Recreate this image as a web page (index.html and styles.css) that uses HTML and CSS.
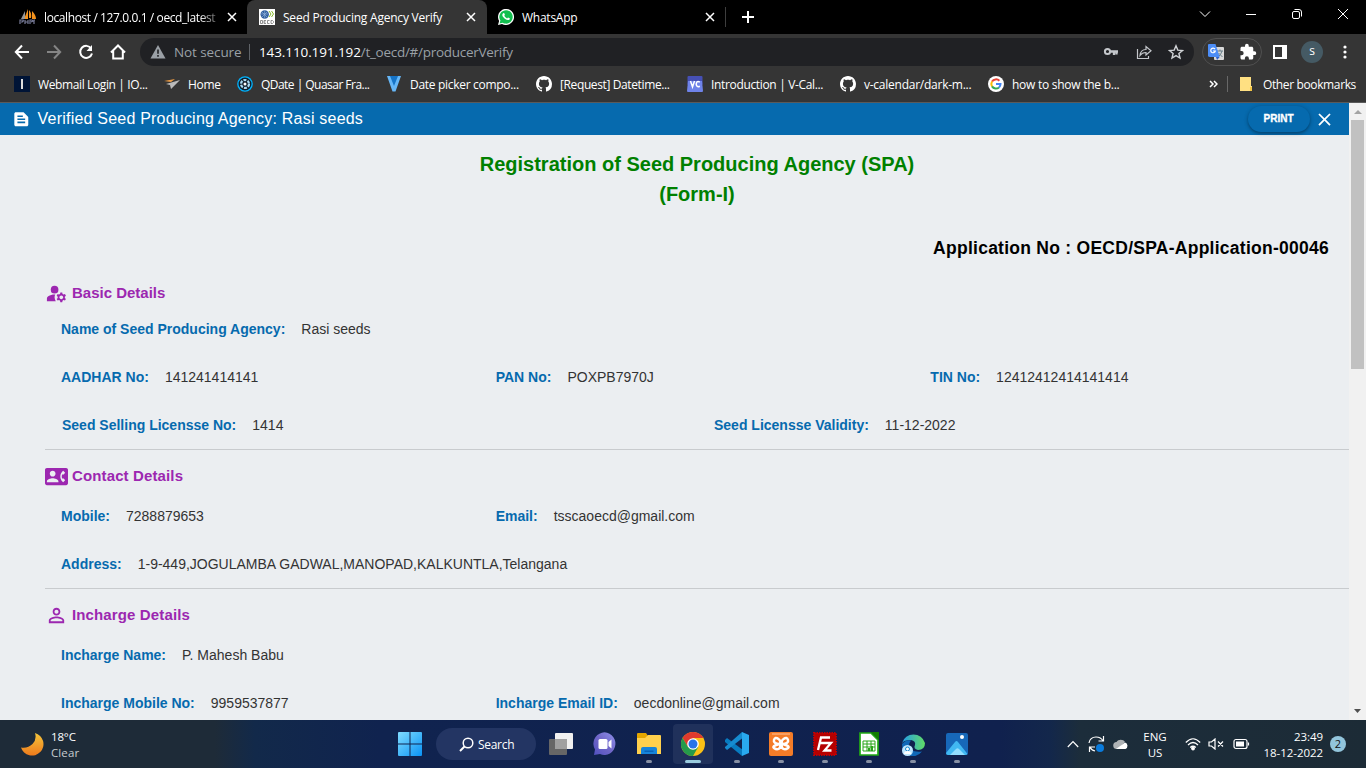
FILE: index.html
```
<!DOCTYPE html>
<html lang="en">
<head>
<meta charset="utf-8">
<title>Seed Producing Agency Verify</title>
<link rel="stylesheet" href="styles.css">
</head>
<body>
<svg class="defs" width="0" height="0">
  <symbol id="x" viewBox="0 0 10 10"><path d="M1 1l8 8M9 1l-8 8" stroke="currentColor" stroke-width="1.5" fill="none"/></symbol>
  <symbol id="github" viewBox="0 0 16 16"><path fill="#fff" d="M8 0C3.58 0 0 3.58 0 8c0 3.54 2.29 6.53 5.47 7.59.4.07.55-.17.55-.38 0-.19-.01-.82-.01-1.49-2.01.37-2.53-.49-2.69-.94-.09-.23-.48-.94-.82-1.13-.28-.15-.68-.52-.01-.53.63-.01 1.08.58 1.23.82.72 1.21 1.87.87 2.33.66.07-.52.28-.87.51-1.07-1.78-.2-3.64-.89-3.64-3.95 0-.87.31-1.59.82-2.15-.08-.2-.36-1.02.08-2.12 0 0 .67-.21 2.2.82.64-.18 1.32-.27 2-.27.68 0 1.36.09 2 .27 1.53-1.04 2.2-.82 2.2-.82.44 1.1.16 1.92.08 2.12.51.56.82 1.27.82 2.15 0 3.07-1.87 3.75-3.65 3.95.29.25.54.73.54 1.48 0 1.07-.01 1.93-.01 2.2 0 .21.15.46.55.38A8.013 8.013 0 0016 8c0-4.42-3.58-8-8-8z"/></symbol>
</svg>

<header class="tabstrip">
  <div class="tab tab-first">
    <svg width="18" height="16" viewBox="0 0 18 16"><path d="M5 10L9 0v10zM10 9V1q3 3 2 8zM13 10V2q4 4 4 8z" fill="#f3921d"/><path d="M2 10L6 2v8z" fill="#999"/><path d="M1 15v-4h3q1 1-1 2H2M6 15v-4M6 13h3M9 11v4M11 15v-4h2l1 1-2 1M15 15v-4h1" stroke="#777b98" stroke-width="1.2" fill="none"/></svg>
    <span class="tab-title fade">localhost / 127.0.0.1 / oecd_latest</span>
    <svg class="tab-x" width="10" height="10"><use href="#x"/></svg>
  </div>
  <div class="tab tab-active">
    <svg width="16" height="16" viewBox="0 0 16 16"><rect width="16" height="16" fill="#fff"/><circle cx="5.7" cy="5.5" r="4.2" fill="#315f9f"/><path d="M2 5h7M5.7 1.5v8M3 3l5 5M8 3L3 8" stroke="#9bbbe0" stroke-width=".6"/><path d="M10 2l2 3-2 3M12.5 2l2 3-2 3" stroke="#88b82d" fill="none"/><path d="M1.500 11.500h2v3h-2zM7 11.500H5v3h2M5 13h1.500M10.500 11.500h-2v3h2M12 11.500h1.500l1 1v1l-1 1H12z" stroke="#777" stroke-width=".8" fill="none"/></svg>
    <span class="tab-title">Seed Producing Agency Verify</span>
    <svg class="tab-x" width="10" height="10"><use href="#x"/></svg>
  </div>
  <div class="tab tab-wa">
    <svg width="16" height="16" viewBox="0 0 16 16"><path d="M0 16l1.1-4A8 8 0 1 1 4 14.9z" fill="#fff"/><path d="M1.600 14.400l.8-2.800a6.700 6.700 0 1 1 2.200 2.100z" fill="#12bf4f"/><path d="M5.200 4.200q.8-.6 1.100.1l.6 1.400q0 .4-.7 1.100 1 1.900 2.900 2.600l.9-1 1.700.8q.4.6-.4 1.500-1.600 1.200-4.500-1T4.300 6q0-1.100.9-1.800z" fill="#fff"/></svg>
    <span class="tab-title">WhatsApp</span>
    <svg class="tab-x" width="10" height="10"><use href="#x"/></svg>
  </div>
  <svg class="plus" width="14" height="14" viewBox="0 0 14 14"><path d="M7 1v12M1 7h12" stroke="#fff" stroke-width="2"/></svg>
  <div class="winctl">
    <svg width="12" height="12" viewBox="0 0 12 12"><path d="M1 3.500l5 5 5-5"/></svg>
    <svg width="12" height="12" viewBox="0 0 12 12"><path d="M1 6.500h10"/></svg>
    <svg width="12" height="12" viewBox="0 0 12 12"><rect x="1.500" y="3.500" width="7" height="7" rx="1.500"/><path d="M3.500 1.500h4.500q2.500 0 2.500 2.500v4.500"/></svg>
    <svg width="12" height="12" viewBox="0 0 12 12"><path d="M1 1l10 10M11 1L1 11"/></svg>
  </div>
</header>

<nav class="toolbar">
  <div class="navbtns">
    <svg width="16" height="16" viewBox="0 0 16 16" stroke="#fff"><path d="M15 8H2M8 1.500L1.800 8 8 14.500"/></svg>
    <svg width="16" height="16" viewBox="0 0 16 16" stroke="#858585"><path d="M1 8h13M8 1.500L14.200 8 8 14.500"/></svg>
    <svg width="16" height="16" viewBox="0 0 16 16" stroke="#fff"><path d="M13.200 4.500A6 6 0 1 0 14 9.500"/><path d="M14 1v6H8.500z" fill="#fff" stroke="none"/></svg>
    <svg width="16" height="16" viewBox="0 0 16 16" stroke="#fff"><path d="M1 8.500L8 1.500l7 7M3.200 7v7.500h9.600V7"/></svg>
  </div>
  <div class="omnibox">
    <svg width="16" height="16" viewBox="0 0 16 16"><path d="M8 1l7.500 13.500H.5z" fill="#9aa0a6"/><path d="M8 5.500v4.300M8 11v1.800" stroke="#202124" stroke-width="1.600"/></svg>
    <span class="notsecure">Not secure</span>
    <span class="vline"></span>
    <span class="url"><b>143.110.191.192</b><i>/t_oecd/#/producerVerify</i></span>
    <div class="omni-icons">
      <svg width="16" height="16" viewBox="0 0 16 16"><circle cx="4.500" cy="7.500" r="2.600" fill="none" stroke="#c4c7cb" stroke-width="2"/><path d="M8 7.500h7M11 8v3M13.500 8v2.500" stroke="#c4c7cb" stroke-width="2.300"/></svg>
      <svg width="17" height="16" viewBox="0 0 17 16"><path d="M2.500 5v9.500h11V12M5 11.500c.4-4 2.500-6 6-6V2.500l5 4.300-5 4.200V8.500C8.500 8.400 6.500 9.500 5 11.500z" fill="none" stroke="#c4c7cb" stroke-width="1.200"/></svg>
      <svg width="16" height="16" viewBox="0 0 16 16"><path d="M8 1.800l1.800 4.300 4.700.4-3.600 3 1.100 4.600-4-2.500-4 2.500 1.100-4.600-3.600-3 4.700-.4z" fill="none" stroke="#d0d3d6" stroke-width="1.400"/></svg>
    </div>
  </div>
  <div class="extpill">
    <svg width="17" height="17" viewBox="0 0 17 17"><rect x="6" y="3" width="10" height="13" rx="1" fill="#d8d8d8"/><path d="M9 7h6M12 5.500V7M14 7q-1 4-4 6M10.500 9l4 4" stroke="#687f89" fill="none"/><path d="M1 0h6.500l4.200 13H2q-2 0-2-1.500V1q0-1 1-1z" fill="#4c8df6"/><path d="M8 13h3.700L9 16z" fill="#2e61cc"/><path d="M7 5.200A2.300 2.300 0 1 0 7.300 7H5" stroke="#fff" stroke-width="1.200" fill="none"/></svg>
    <svg class="puzzle" width="18" height="18" viewBox="0 0 24 24"><path fill="#fff" d="M20.500 11H19V7c0-1.100-.9-2-2-2h-4V3.500a2.500 2.500 0 0 0-5 0V5H4c-1.100 0-2 .9-2 2v3.800h1.500a2.700 2.700 0 0 1 0 5.400H2V20c0 1.100.9 2 2 2h3.800v-1.500a2.700 2.700 0 0 1 5.400 0V22H17c1.100 0 2-.9 2-2v-4h1.500a2.500 2.500 0 0 0 0-5z"/></svg>
  </div>
  <svg class="panel" width="14" height="14" viewBox="0 0 14 14"><path fill="#fff" d="M0 0h14v14H0zM2 2v10h7V2z" fill-rule="evenodd"/></svg>
  <span class="avatar">s</span>
  <svg class="dots" width="4" height="14" viewBox="0 0 4 14" fill="#fff"><circle cx="2" cy="2" r="1.600"/><circle cx="2" cy="7" r="1.600"/><circle cx="2" cy="12" r="1.600"/></svg>
</nav>

<nav class="bookmarks">
  <span class="bm bm1"><svg width="16" height="16"><rect width="16" height="16" fill="#001436"/><path d="M8 3v10" stroke="#ddd" stroke-width="2"/></svg><em>Webmail Login | IO...</em></span>
  <span class="bm bm2"><svg width="16" height="16" viewBox="0 0 16 16"><path d="M0 5l11-2-4 3z" fill="#ee9d45"/><path d="M16 4L2 8l4 1zM16 4L6 9l1 4z" fill="#bbb"/></svg><em>Home</em></span>
  <span class="bm bm3"><svg width="16" height="16" viewBox="0 0 16 16"><circle cx="8" cy="8" r="7.800" fill="#00b4ff"/><circle cx="8" cy="8" r="6.500" fill="#111e2b"/><circle cx="8" cy="8" r="4" fill="none" stroke="#a9d9f2" stroke-width="2.200" stroke-dasharray="3 1.200"/><circle cx="8" cy="8" r="1.500" fill="#fff"/></svg><em>QDate | Quasar Fra...</em></span>
  <span class="bm bm4"><svg width="16" height="16" viewBox="0 0 16 16"><path d="M1 0h5l2 6 2-6h5L9.500 15.500h-3z" fill="#66b7f7"/><path d="M4 0h8L8 10z" fill="#1674c7"/></svg><em>Date picker compo...</em></span>
  <span class="bm bm5"><svg width="16" height="16"><use href="#github"/></svg><em>[Request] Datetime...</em></span>
  <span class="bm bm6"><svg width="16" height="16" viewBox="0 0 16 16"><rect x=".5" width="15" height="9" rx="1" fill="#4650b5"/><path d="M1 5h14l1 10q0 1-1 1H1q-1 0-1-1z" fill="#6f83e9"/><path d="M3.500 5L5.500 11l2-6M12.800 6.200q-3-2-3.600 2 .4 3.500 3.600 2" stroke="#fff" stroke-width="1.500" fill="none"/></svg><em>Introduction | V-Cal...</em></span>
  <span class="bm bm7"><svg width="16" height="16"><use href="#github"/></svg><em>v-calendar/dark-m...</em></span>
  <span class="bm bm8"><svg width="16" height="16" viewBox="0 0 16 16"><circle cx="8" cy="8" r="8" fill="#fff"/><g fill="none" stroke-width="2"><path d="M11.400 4.800A4.700 4.700 0 0 0 4 5.600" stroke="#ea4335"/><path d="M4 5.600a4.700 4.700 0 0 0 0 4.800" stroke="#fbbc05"/><path d="M4 10.400a4.700 4.700 0 0 0 7 1" stroke="#34a853"/><path d="M11 11.400A4.700 4.700 0 0 0 12.500 8H8" stroke="#4285f4"/></g></svg><em>how to show the b...</em></span>
  <svg class="more" width="9" height="8" viewBox="0 0 9 8"><path d="M1 1l3 3-3 3M5 1l3 3-3 3" stroke="#fff" stroke-width="1.500" fill="none"/></svg>
  <span class="bmline"></span>
  <span class="bm other"><svg width="13" height="14" viewBox="0 0 13 14"><path d="M0 0h11v9h1v5H0z" fill="#ffe082"/><path d="M10 10h2v4h-2z" fill="#f3c544"/></svg><em>Other bookmarks</em></span>
</nav>

<div class="view">
  <main class="page">
    <div class="titlebar">
      <svg width="18.600" height="18.600" viewBox="0 0 24 24"><path fill="#fff" d="M20.410 8.410l-4.830-4.830c-.37-.37-.88-.58-1.410-.58H5c-1.100 0-2 .9-2 2v14c0 1.100.9 2 2 2h14c1.100 0 2-.9 2-2V9.830c0-.53-.21-1.040-.59-1.420zM7 7h7v2H7V7zm10 10H7v-2h10v2zm0-4H7v-2h10v2z"/></svg>
      <h1>Verified Seed Producing Agency: Rasi seeds</h1>
      <button class="print">PRINT</button>
      <svg class="close" width="21" height="21" viewBox="0 0 24 24"><path fill="#fff" d="M19 6.410L17.590 5 12 10.590 6.410 5 5 6.410 10.590 12 5 17.590 6.410 19 12 13.410 17.590 19 19 17.590 13.410 12z"/></svg>
    </div>
    <div class="form">
      <h2 class="form-title">Registration of Seed Producing Agency (SPA)<br>(Form-I)</h2>
      <div class="appno">Application No : OECD/SPA-Application-00046</div>

      <section class="sec sec-first">
        <h3><svg width="23" height="23" viewBox="0 0 24 24"><circle cx="10" cy="8" r="4"/><path d="M10.670 13.020C10.450 13.010 10.230 13 10 13c-2.420 0-4.680.67-6.610 1.820-.88.52-1.390 1.500-1.390 2.530V20h9.260c-.79-1.130-1.260-2.510-1.260-4 0-1.070.25-2.070.67-2.980z"/><path d="M20.750 16c0-.22-.03-.42-.06-.63l1.140-1.010-1-1.730-1.450.49c-.32-.27-.68-.48-1.080-.63L18 11h-2l-.3 1.490c-.4.15-.76.36-1.080.63l-1.450-.49-1 1.730 1.140 1.010c-.03.21-.06.41-.06.63s.03.42.06.63l-1.140 1.010 1 1.730 1.450-.49c.32.27.68.48 1.080.63L16 21h2l.3-1.490c.4-.15.76-.36 1.080-.63l1.450.49 1-1.730-1.140-1.010c.03-.21.06-.41.06-.63zM17 18c-1.100 0-2-.9-2-2s.9-2 2-2 2 .9 2 2-.9 2-2 2z"/></svg><span>Basic Details</span></h3>
        <div class="row"><div class="cell"><label>Name of Seed Producing Agency:</label><span>Rasi seeds</span></div></div>
        <div class="row"><div class="cell"><label>AADHAR No:</label><span>141241414141</span></div><div class="cell"><label>PAN No:</label><span>POXPB7970J</span></div><div class="cell"><label>TIN No:</label><span>12412412414141414</span></div></div>
        <div class="row halves"><div class="cell"><label>Seed Selling Licensse No:</label><span>1414</span></div><div class="cell"><label>Seed Licensse Validity:</label><span>11-12-2022</span></div></div>
      </section>
      <section class="sec">
        <h3><svg width="23" height="23" viewBox="0 0 24 24"><path d="M22 3H2C.9 3 0 3.900 0 5v14c0 1.100.9 2 2 2h20c1.100 0 1.990-.9 1.990-2L24 5c0-1.100-.9-2-2-2zM8 6c1.660 0 3 1.340 3 3s-1.340 3-3 3-3-1.340-3-3 1.340-3 3-3zm6 12H2v-1c0-2 4-3.100 6-3.100s6 1.100 6 3.100v1zm3.850-4h1.640L21 16l-1.990 1.990c-1.310-.98-2.280-2.380-2.730-3.990-.18-.64-.28-1.310-.28-2s.1-1.360.28-2c.45-1.620 1.420-3.010 2.730-3.990L21 8l-1.510 2h-1.640c-.22.63-.35 1.300-.35 2s.13 1.370.35 2z"/></svg><span>Contact Details</span></h3>
        <div class="row thirds"><div class="cell"><label>Mobile:</label><span>7288879653</span></div><div class="cell"><label>Email:</label><span>tsscaoecd@gmail.com</span></div></div>
        <div class="row"><div class="cell"><label>Address:</label><span>1-9-449,JOGULAMBA GADWAL,MANOPAD,KALKUNTLA,Telangana</span></div></div>
      </section>
      <section class="sec">
        <h3><svg width="23" height="23" viewBox="0 0 24 24"><path d="M12 5.900c1.160 0 2.100.94 2.100 2.100s-.94 2.100-2.100 2.100S9.900 9.160 9.900 8s.94-2.100 2.100-2.100m0 9c2.970 0 6.100 1.460 6.100 2.100v1.100H5.900V17c0-.64 3.130-2.100 6.100-2.100M12 4C9.790 4 8 5.790 8 8s1.790 4 4 4 4-1.790 4-4-1.790-4-4-4zm0 9c-2.670 0-8 1.340-8 4v3h16v-3c0-2.660-5.330-4-8-4z"/></svg><span>Incharge Details</span></h3>
        <div class="row"><div class="cell"><label>Incharge Name:</label><span>P. Mahesh Babu</span></div></div>
        <div class="row thirds"><div class="cell"><label>Incharge Mobile No:</label><span>9959537877</span></div><div class="cell"><label>Incharge Email ID:</label><span>oecdonline@gmail.com</span></div></div>
      </section>
    </div>
  </main>
  <aside class="scroll">
    <svg width="17" height="17" viewBox="0 0 17 17"><path d="M5 11h8L9 7z" fill="#a3a3a3"/></svg>
    <div class="thumb"></div>
    <svg class="down" width="17" height="17" viewBox="0 0 17 17"><path d="M5 6h7L8.500 10z" fill="#505050"/></svg>
  </aside>
</div>

<footer class="taskbar">
  <div class="weather">
    <svg width="24" height="24" viewBox="0 0 24 24"><defs><linearGradient id="mg" x2="0" y2="1"><stop stop-color="#f4c63c"/><stop offset="1" stop-color="#ee7a1c"/></linearGradient></defs><path d="M15 1A11.500 11.500 0 1 1 1 15.500Q8 16.500 12.500 12T15 1z" fill="url(#mg)"/></svg>
    <p>18°C<br><span>Clear</span></p>
  </div>
  <div class="apps">
    <svg class="start" width="24" height="24" viewBox="0 0 24 24"><defs><linearGradient id="wg" x2="1" y2="1"><stop stop-color="#80dcff"/><stop offset="1" stop-color="#0a93f5"/></linearGradient></defs><path d="M0 1q0-1 1-1h10.500v11.500H0zM12.500 0H23q1 0 1 1v10.500H12.500zM0 12.500h11.500V24H1q-1 0-1-1zM12.500 12.500H24V23q0 1-1 1H12.500z" fill="url(#wg)"/></svg>
    <div class="search"><svg width="15" height="15" viewBox="0 0 15 15"><circle cx="9" cy="6" r="4.800" fill="none" stroke="#fff" stroke-width="1.500"/><path d="M5.500 9.500L1 14" stroke="#fff" stroke-width="1.900"/></svg><span>Search</span></div>
    <div class="app"><svg width="24" height="24" viewBox="0 0 24 24"><rect x="6" y="1" width="18" height="16" rx="1" fill="#f0f0f0"/><rect y="7" width="18" height="16" rx="1" fill="#666"/><path d="M6 7h12v10H6z" fill="#a0a0a0"/></svg></div>
    <div class="app"><svg width="24" height="24" viewBox="0 0 24 24"><defs><linearGradient id="tg" x1="1" x2="0" y2="1"><stop stop-color="#8f91ed"/><stop offset=".5" stop-color="#7067c8"/><stop offset="1" stop-color="#5150c0"/></linearGradient></defs><path d="M1 23l1-5.500A11 11.300 0 1 1 7 22z" fill="url(#tg)"/><rect x="5.500" y="7" width="9" height="10" rx="1.500" fill="#fff"/><path d="M15.500 10l3-2.500v9l-3-2.500z" fill="#fff"/></svg></div>
    <div class="app open"><svg width="24" height="24" viewBox="0 0 24 24"><path d="M0 2q0-1 1-1h8l2 3-2 3H0z" fill="#e4a600"/><path d="M0 6h8l3-3h12q1 0 1 1v18H0z" fill="#ffd04d"/><path d="M4 22v-5q0-2 2-2h12q2 0 2 2v5z" fill="#1684da"/><path d="M7.500 18.500h9v1.500h-9z" fill="#0862b7"/></svg></div>
    <div class="app open current"><svg width="24" height="24" viewBox="0 0 24 24"><circle cx="12" cy="12" r="12" fill="#fbc116"/><path d="M1.600 6A12 12 0 0 1 22.400 6H12L7 15z" fill="#df3a2e"/><path d="M1.600 6A12 12 0 0 0 12 24l5.200-9H7z" fill="#259b4b"/><circle cx="12" cy="12" r="5.800" fill="#fff"/><circle cx="12" cy="12" r="4.500" fill="#2873e8"/></svg></div>
    <div class="app open"><svg width="24" height="24" viewBox="0 0 24 24"><path d="M0 8l2-2 16 12-1 6L0 10z" fill="#087bc0"/><path d="M17 0l2 5L2 18l-2-2v-1z" fill="#168bd0"/><path d="M17 0l7 3v18l-7 3z" fill="#29a9ef"/></svg></div>
    <div class="app open"><svg width="24" height="24" viewBox="0 0 24 24"><rect width="24" height="24" rx="2" fill="#f47c28"/><path d="M3 2h18" stroke="#ffc29a"/><path d="M10.500 12Q4 11.500 5 8t4.500-1q2 1 2 5t-2 5T5 16t5.500-4h3Q20 11.500 19 8t-4.500-1q-2 1-2 5t2 5 4.500-1-5.500-4" stroke="#fff" stroke-width="2.500" fill="none" stroke-linejoin="round"/></svg></div>
    <div class="app open"><svg width="24" height="24" viewBox="0 0 24 24"><rect x="1" y="1" width="22" height="22" fill="#b50000" stroke="#c40000" stroke-width="2" stroke-dasharray="1.500 1"/><path d="M5 18L8 5.500h9M6.500 11h7M12 11h6l-6.500 7.500h7" stroke="#fff" stroke-width="2.300" fill="none"/></svg></div>
    <div class="app open"><svg width="24" height="24" viewBox="0 0 24 24"><path d="M3 1h11l7 7v15H3z" fill="#fff" stroke="#20aa15" stroke-width="1.700"/><path d="M14 0h8v8z" fill="#127d00"/><path d="M6 9h12v10H6zM6 12h12M6 15h12M10 9v10M14 9v10" fill="none" stroke="#29a51b"/><path d="M12 16v3M15 14v5" stroke="#29a51b" stroke-width="2"/></svg></div>
    <div class="app open"><svg width="24" height="24" viewBox="0 0 24 24"><defs><linearGradient id="eg" x2="1"><stop stop-color="#249dea"/><stop offset="1" stop-color="#61dc64"/></linearGradient></defs><path d="M1 11A12 12 0 0 1 24 11q0 7-7 7-5-1-3-5 1-4-4-5-7 0-9 3z" fill="url(#eg)"/><path d="M1 12Q5 7 10 8.500q-4 5 0 9 4 3 11 2Q16 26 8 23.500 1 21 1 12z" fill="#1068b8"/><circle cx="6.500" cy="18.500" r="5.500" fill="#bfe7ff"/><circle cx="6.500" cy="17" r="2" fill="#fff" stroke="#168bd3"/><path d="M3 22q0-3 3.500-3t3.500 3" fill="#fff"/></svg></div>
    <div class="app open"><svg width="24" height="24" viewBox="0 0 24 24"><rect x="1" y="1" width="22" height="22" rx="2" fill="#1768b9"/><path d="M1 21L10 10q1.500-2 3 0l9.500 12q-1 1-2 1H3q-2 0-2-2z" fill="#41b8f2"/><path d="M5 23l6-6q1.500-1.500 3 0l6 6z" fill="#92deff"/><circle cx="17" cy="5" r="2" fill="#fff"/></svg></div>
  </div>
  <div class="tray">
    <svg class="t-up" width="12" height="8" viewBox="0 0 12 8"><path d="M.8 7L6 1.500 11.200 7"/></svg>
    <svg class="t-sync" width="18" height="18" viewBox="0 0 18 18"><path d="M1 8Q2 2 8 2q5 0 7 4M15.500 1v5h-5M7 12H1.500v5M2 12q1 3 5 4"/><circle cx="12" cy="13" r="4" fill="#0a7bdc" stroke="none"/></svg>
    <svg class="t-cloud" width="16" height="12" viewBox="0 0 16 12"><path d="M4 11a3.500 3.500 0 0 1-.5-7A5 5 0 0 1 12 4l-5 5z" fill="#aeb2b5" stroke="none"/><path d="M3 11L12 4.500A3.500 3.500 0 0 1 12.500 11z" fill="#fff" stroke="none"/></svg>
    <p class="lang">ENG<br>US</p>
    <svg class="t-wifi" width="16" height="14" viewBox="0 0 16 14"><path d="M.8 5.500Q8-2 15.200 5.500M3 8Q8 3 13 8M5.200 10.500Q8 8 10.800 10.500"/><circle cx="8" cy="11.500" r="1.300" fill="#fff"/></svg>
    <svg class="t-vol" width="16" height="12" viewBox="0 0 16 12"><path d="M1 4h2.500L7 1v10L3.500 8H1zM10 3.500l5 5M15 3.500l-5 5"/></svg>
    <svg class="t-bat" width="17" height="12" viewBox="0 0 17 12"><rect x="1" y="1.500" width="13" height="9" rx="2"/><rect x="3" y="3.500" width="8" height="5" fill="#fff" stroke="none"/><path d="M15.500 4.500v3"/></svg>
    <p class="clock">23:49<br>18-12-2022</p>
    <span class="notif">2</span>
  </div>
</footer>
</body>
</html>
```
FILE: styles.css
```
* { box-sizing: border-box; }
body { margin: 0; width: 1366px; height: 768px; overflow: hidden; display: flex; flex-direction: column; font-family: "Open Sans", "Noto Sans", sans-serif; font-size: 12px; color: #fff; background: #353535; }
svg { display: block; flex: none; }
p, h1, h2, h3 { margin: 0; font-weight: normal; }
.defs { position: absolute; }
em, i { font-style: normal; }
b { font-weight: 400; }

.tabstrip { height: 34px; background: #000; display: flex; align-items: center; flex: none; }
.tab { display: flex; align-items: center; height: 34px; }
.tab-first { width: 247px; padding-left: 19px; }
.tab-title { white-space: nowrap; }
.tab-first .tab-title { margin-left: 7px; width: 177px; letter-spacing: -.4px; }
.fade { mask-image: linear-gradient(90deg, #000 155px, rgba(0,0,0,.15) 177px); }
.tab-first .tab-x { margin-left: 6px; }
.tab-active { width: 240px; padding-left: 12px; background: #353535; border-radius: 8px 8px 0 0; }
.tab-active .tab-title { margin-left: 8px; width: 183px; letter-spacing: -.22px; }
.tab-wa { width: 239px; padding-left: 11px; border-right: 1px solid #3e3e3e; height: 20px; }
.tab-wa .tab-title { margin-left: 8px; width: 183px; letter-spacing: -.25px; }
.plus { margin-left: 15px; }
.winctl { margin-left: auto; display: flex; gap: 34px; padding: 0 17px 6px 0; fill: none; stroke: #fff; }

.toolbar { height: 36px; display: flex; align-items: center; padding-left: 14px; flex: none; }
.navbtns { display: flex; gap: 16px; fill: none; stroke-width: 2; }
.omnibox { margin-left: 14px; width: 1054px; height: 28px; border-radius: 14px; background: #202124; display: flex; align-items: center; padding-left: 10px; font-size: 13.5px; }
.notsecure { margin-left: 8px; width: 75px; color: #9aa0a6; white-space: nowrap; letter-spacing: -.1px; }
.vline { width: 1px; height: 16px; background: #5f6368; }
.url { margin-left: 9px; letter-spacing: -.28px; white-space: nowrap; }
.url b { letter-spacing: -.1px; }
.url i { color: #9aa0a6; }
.omni-icons { display: flex; gap: 16px; margin-left: auto; padding-right: 10px; }
.extpill { margin-left: 8px; width: 60px; height: 28px; border: 1px solid #505050; border-radius: 14px; display: flex; align-items: center; gap: 14px; padding-left: 5px; }
.panel { margin-left: 11px; }
.avatar { margin-left: 14px; width: 22px; height: 22px; border-radius: 50%; background: #455a64; text-align: center; line-height: 20px; font-size: 12px; }
.dots { margin-left: 20px; }

.bookmarks { height: 33px; display: flex; align-items: center; padding: 0 0 4px 14px; flex: none; border-bottom: 1px solid #5a5a5a; }
.bm { display: flex; align-items: center; gap: 8px; white-space: nowrap; flex: none; letter-spacing: -.3px; }
.bm1 { width: 150px; letter-spacing: -.38px; }
.bm2 { width: 73px; }
.bm3 { width: 149px; letter-spacing: -.53px; }
.bm4 { width: 150px; }
.bm5 { width: 151px; letter-spacing: -.38px; }
.bm6 { width: 153px; letter-spacing: -.34px; }
.bm7 { width: 148px; letter-spacing: -.25px; }
.bm8 { width: 221px; letter-spacing: -.26px; }
.bmline { width: 1px; height: 16px; background: #686868; margin: 0 12px 0 9px; }
.other { gap: 10px; letter-spacing: -.37px; }

.view { height: 617px; display: flex; flex: none; overflow: hidden; font-family: "Liberation Sans", Arial, sans-serif; }
.page { width: 1349px; background: #ebeef1; overflow: hidden; }
.titlebar { height: 32px; background: #066aae; display: flex; align-items: center; padding-left: 12px; }
.titlebar h1 { font-size: 16px; letter-spacing: .21px; margin-left: 7px; width: 1210px; }
.print { width: 62px; height: 26px; border: 0; border-radius: 13px; background: #066aae; box-shadow: 0 1px 4px rgba(0,0,0,.3), 0 2px 2px rgba(0,0,0,.12); color: #fff; font: bold 10px "Liberation Sans", Arial, sans-serif; letter-spacing: 0; -webkit-text-stroke: .3px #fff; padding: 0 0 2px; }
.close { margin-left: 4px; }
.form { padding: 14px 0 0 45px; color: #000; }
.form-title { color: #008000; font-size: 20px; font-weight: bold; line-height: 30px; text-align: center; }
.appno { text-align: right; padding-right: 20px; margin-top: 26px; height: 46px; line-height: 26px; font-weight: bold; font-size: 17.5px; letter-spacing: .26px; }
.sec { padding-top: 14px; border-top: 1px solid #c8cbce; }
.sec-first { padding-top: 0; border: 0; }
.sec h3 { height: 28px; display: flex; align-items: center; gap: 4px; padding-bottom: 4px; color: #9c27b0; fill: #9c27b0; font-size: 15px; font-weight: bold; letter-spacing: .13px; }
.sec-first h3 { height: 24px; padding: 0; }
.sec h3 span { padding-bottom: 2px; }
.sec-first h3 span { letter-spacing: 0; }
.row { display: flex; height: 48px; }
.cell { flex: 1; display: flex; align-items: center; padding-left: 16px; font-size: 14px; white-space: nowrap; }
.thirds .cell { flex: 0 0 33.3333%; }
.halves .cell { padding-left: 17px; }
.cell label { color: #066aae; font-weight: bold; }
.cell span { margin-left: 16px; color: #333; }
.scroll { width: 17px; background: #f1f1f1; display: flex; flex-direction: column; }
.thumb { width: 13px; height: 249px; margin-left: 2px; background: #c1c1c1; }
.down { margin-top: auto; }

.taskbar { height: 48px; display: flex; align-items: center; flex: none; background: linear-gradient(90deg, #1e2b38 0, #1e2b38 215px, #12294a 255px, #10234f 380px, #10214e 1000px, #13274b 1050px, #1c2d3b 1080px, #1c2b36 100%); line-height: 16px; }
.weather { width: 398px; padding-left: 20px; display: flex; align-items: center; gap: 7px; font-size: 11.5px; }
.weather p, .lang, .clock { padding-top: 1px; }
.weather p { letter-spacing: -.15px; }
.weather span { color: #c8ccd0; letter-spacing: .1px; }
.apps { display: flex; align-items: center; height: 48px; }
.search { margin: 0 5px 0 14px; width: 100px; height: 32px; border-radius: 16px; background: #233563; display: flex; align-items: center; padding-left: 23px; gap: 4px; font-size: 12px; letter-spacing: -.3px; }
.search span { padding-top: 2px; }
.app { width: 40px; height: 40px; margin-right: 4px; border-radius: 4px; display: flex; flex-direction: column; align-items: center; padding-top: 8px; }
.open::after { content: ""; width: 6px; height: 3px; border-radius: 2px; background: #8790a4; margin-top: 4px; }
.current { background: #20315b; }
.current::after { width: 16px; background: #9accdf; }
.tray { margin-left: auto; display: flex; align-items: center; fill: none; stroke: #fff; stroke-width: 1.2; padding-right: 20px; font-size: 11.5px; }
.t-sync { margin-left: 9px; }
.t-cloud { margin-left: 7px; }
.lang { margin-left: 13px; width: 26px; text-align: center; }
.t-wifi { margin-left: 17px; }
.t-vol { margin-left: 7px; }
.t-bat { margin-left: 9px; }
.clock { margin-left: 12px; width: 61px; text-align: right; white-space: nowrap; letter-spacing: -.05px; }
.notif { margin-left: 7px; width: 16px; height: 16px; border-radius: 50%; background: #92c5dc; color: #111; text-align: center; font-size: 11px; line-height: 16px; }
```
